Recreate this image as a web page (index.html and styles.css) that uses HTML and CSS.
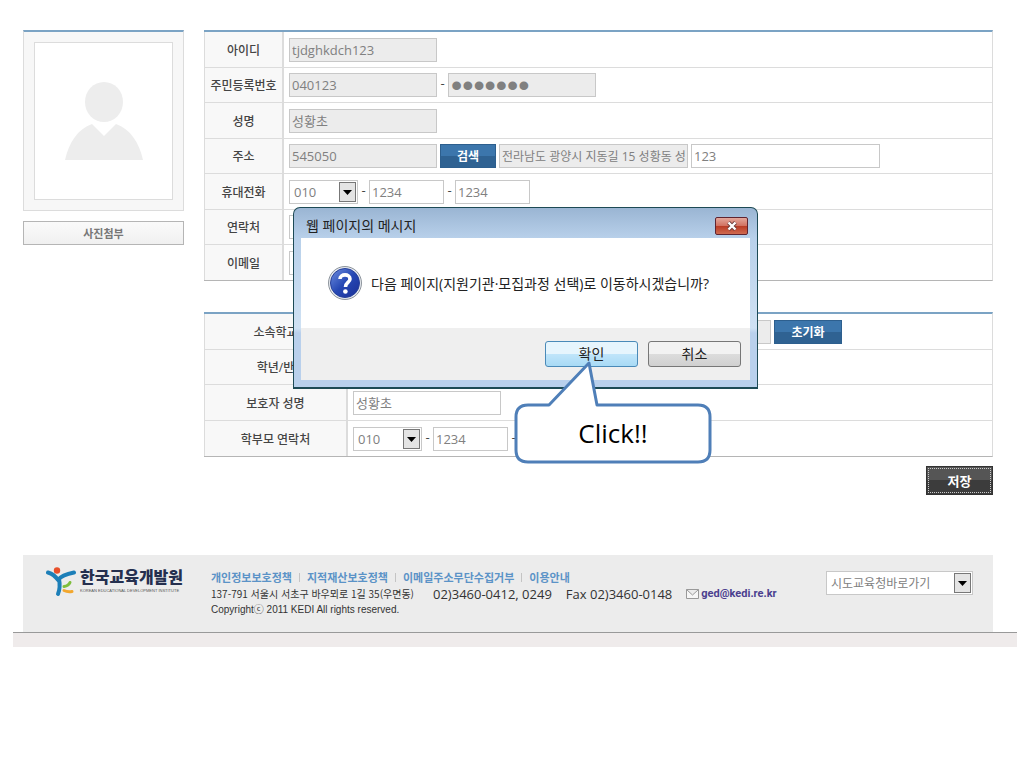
FILE: index.html
```html
<!DOCTYPE html>
<html lang="ko">
<head>
    <meta charset="UTF-8">
    <meta name="viewport" content="width=device-width, initial-scale=1.0">
    <title>한국교육개발원</title>
    <link rel="stylesheet" href="styles.css">
</head>
<body>
    <div class="container">

        <!-- Photo -->
        <div class="photo">
            <div class="photo-frame">
                <div class="photo-inner">
                    <svg width="78" height="80" viewBox="0 0 78 80">
                        <ellipse cx="39" cy="21" rx="19" ry="20" fill="#ededed"/>
                        <path d="M0 79C4 61 13 48 27 43L39 55L51 43C65 48 74 61 78 79Z" fill="#ededed"/>
                    </svg>
                </div>
            </div>
            <button type="button" class="btn-photo">사진첨부</button>
        </div>

        <form class="forms">
            <!-- Personal information -->
            <table>
                <tr>
                    <th><label for="userId">아이디</label></th>
                    <td><div class="row"><input type="text" id="userId" value="tjdghkdch123" readonly></div></td>
                </tr>
                <tr>
                    <th><label for="jumin1">주민등록번호</label></th>
                    <td><div class="row">
                        <input type="text" id="jumin1" value="040123" readonly>
                        <span class="dash">-</span>
                        <input type="password" aria-label="주민등록번호 뒷자리" value="1234567" readonly>
                    </div></td>
                </tr>
                <tr>
                    <th><label for="userName">성명</label></th>
                    <td><div class="row"><input type="text" id="userName" value="성황초" readonly></div></td>
                </tr>
                <tr>
                    <th><label for="zip">주소</label></th>
                    <td><div class="row">
                        <input type="text" id="zip" value="545050" readonly>
                        <button type="button" class="btn-blue">검색</button>
                        <input type="text" class="long address-base" aria-label="기본주소" value="전라남도 광양시 지동길 15 성황동 성황초등학교" readonly>
                        <input type="text" class="long" aria-label="상세주소" value="123">
                    </div></td>
                </tr>
                <tr>
                    <th><label for="mobile">휴대전화</label></th>
                    <td><div class="row">
                        <select id="mobile"><option>010</option></select>
                        <span class="dash">-</span>
                        <input type="text" class="short" aria-label="휴대전화 앞자리" value="1234">
                        <span class="dash">-</span>
                        <input type="text" class="short" aria-label="휴대전화 뒷자리" value="1234">
                    </div></td>
                </tr>
                <tr>
                    <th><label for="tel">연락처</label></th>
                    <td><div class="row"><select id="tel"><option></option></select></div></td>
                </tr>
                <tr>
                    <th><label for="email">이메일</label></th>
                    <td><div class="row"><input type="text" id="email"></div></td>
                </tr>
            </table>

            <!-- School information -->
            <table class="school">
                <tr>
                    <th><label for="school">소속학교</label></th>
                    <td><div class="row">
                        <input type="text" id="school" class="school-name" readonly>
                        <button type="button" class="btn-blue wide">초기화</button>
                    </div></td>
                </tr>
                <tr>
                    <th><label for="grade">학년/반</label></th>
                    <td><div class="row"><input type="text" id="grade" class="short"></div></td>
                </tr>
                <tr>
                    <th><label for="parent">보호자 성명</label></th>
                    <td><div class="row"><input type="text" id="parent" value="성황초"></div></td>
                </tr>
                <tr>
                    <th><label for="parentTel">학부모 연락처</label></th>
                    <td><div class="row">
                        <select id="parentTel"><option>010</option></select>
                        <span class="dash">-</span>
                        <input type="text" class="short" aria-label="학부모 연락처 앞자리" value="1234">
                        <span class="dash">-</span>
                        <input type="text" class="short" aria-label="학부모 연락처 뒷자리">
                    </div></td>
                </tr>
            </table>

            <button type="button" class="btn-save">저장</button>
        </form>
    </div>

    <!-- Footer -->
    <footer>
        <div class="footer-inner">
            <div class="logo">
                <svg width="30" height="30" viewBox="0 0 30 30" fill="none" stroke-linecap="round">
                    <circle cx="11" cy="3.500" r="3.200" fill="#e8502a"/>
                    <path d="M2 5.500C7 7 10 10 12 13C15 9 20 7 28 5.500" stroke="#1d7fb8" stroke-width="4" stroke-linejoin="round"/>
                    <path d="M13 12C14 17 14 22 12 27" stroke="#1d7fb8" stroke-width="4"/>
                    <path d="M18 19.500C21 19 23 18 24 15.500" stroke="#7fbe3c" stroke-width="3"/>
                    <path d="M18 23.500C21 25 23 25 26 24.500" stroke="#f2a72e" stroke-width="3"/>
                </svg>
                <div class="logo-text">
                    <strong>한국교육개발원</strong>
                    <small>KOREAN EDUCATIONAL DEVELOPMENT INSTITUTE</small>
                </div>
            </div>
            <div class="info">
                <div class="policy">
                    <a href="#">개인정보보호정책</a>
                    <a href="#">지적재산보호정책</a>
                    <a href="#">이메일주소무단수집거부</a>
                    <a href="#">이용안내</a>
                </div>
                <div class="contact">
                    <span class="address">137-791 서울시 서초구 바우뫼로 1길 35(우면동)</span>
                    <span>02)3460-0412, 0249</span>
                    <span>Fax 02)3460-0148</span>
                    <a href="mailto:ged@kedi.re.kr" class="mail">
                        <svg width="13" height="10" viewBox="0 0 13 10" fill="#f6f6f6" stroke="#999"><path d="M.5.5H12.500V9.500H.5ZM.5.5L6.500 6L12.500.5"/></svg>
                        ged@kedi.re.kr
                    </a>
                </div>
                <p class="copyright">Copyrightⓒ 2011 KEDI All rights reserved.</p>
            </div>
            <select class="office" aria-label="시도교육청바로가기"><option>시도교육청바로가기</option></select>
        </div>
    </footer>

    <!-- Confirm dialog -->
    <div class="dialog" role="dialog" aria-labelledby="dialogTitle">
        <div class="dialog-title">
            <span id="dialogTitle">웹 페이지의 메시지</span>
            <button type="button" class="close" aria-label="닫기">
                <svg width="12" height="10" viewBox="0 0 12 10" fill="none"><path d="M2.500 1.500L9.500 8.500M9.500 1.500L2.500 8.500" stroke="#6b3b3b" stroke-width="4"/><path d="M2.500 1.500L9.500 8.500M9.500 1.500L2.500 8.500" stroke="#fff" stroke-width="2.400"/></svg>
            </button>
        </div>
        <div class="dialog-body">
            <svg width="34" height="34" viewBox="0 0 34 34">
                <defs>
                    <linearGradient id="ball" x1="0" y1="0" x2="1" y2="1">
                        <stop offset="0" stop-color="#6f8fe0"/>
                        <stop offset=".5" stop-color="#2648b4"/>
                        <stop offset="1" stop-color="#1a2f96"/>
                    </linearGradient>
                </defs>
                <circle cx="17" cy="17" r="16.500" fill="#e4e8ee" stroke="#8d949c"/>
                <circle cx="17" cy="17" r="14.500" fill="url(#ball)" stroke="#27409a"/>
                <path d="M12 13C12 7.500 22 7.500 22 13C22 16.500 17.500 16.500 17.500 21" fill="none" stroke="#fff" stroke-width="3.600"/>
                <circle cx="17.400" cy="25.500" r="2.300" fill="#fff"/>
            </svg>
            <p>다음 페이지(지원기관·모집과정 선택)로 이동하시겠습니까?</p>
        </div>
        <div class="dialog-buttons">
            <button type="button" class="ok">확인</button>
            <button type="button">취소</button>
        </div>

        <div class="callout">
            <svg width="198" height="104" viewBox="0 0 198 104">
                <path d="M14 44H35L75 2L83 44H184Q196 44 196 56V89Q196 101 184 101H14Q2 101 2 89V56Q2 44 14 44Z" fill="#fff" stroke="#4f7fb8" stroke-width="3" stroke-linejoin="round"/>
            </svg>
            <span>Click!!</span>
        </div>
    </div>
</body>
</html>
```

FILE: styles.css
```css
* {
    box-sizing: border-box;
}

body {
    font-family: "Open Sans", "Noto Sans CJK KR", sans-serif;
    font-size: 13px;
    color: #444;
    background: #fff;
    margin: 0;
    padding: 30px 7px 0 13px;
    position: relative;
}

button, input, select {
    font-family: inherit;
    font-size: 13px;
    margin: 0;
}

button {
    padding: 0;
    cursor: pointer;
}

.container {
    display: flex;
    gap: 20px;
    padding: 0 24px 0 10px;
}

/* photo */
.photo {
    width: 161px;
    flex-shrink: 0;
}

.photo-frame {
    padding: 10px;
    background: #f7f7f7;
    border: 1px solid #dcdcdc;
    border-top: 2px solid #7ba3c4;
}

.photo-inner {
    display: flex;
    justify-content: center;
    align-items: center;
    height: 158px;
    background: #fff;
    border: 1px solid #dcdcdc;
}

.btn-photo {
    width: 100%;
    height: 24px;
    margin-top: 10px;
    font-size: 11px;
    font-weight: bold;
    color: #777;
    background: linear-gradient(#fafafa, #f0f0f0);
    border: 1px solid #b5b5b5;
}

/* form tables */
.forms {
    flex: 1;
    min-width: 0;
}

table {
    width: 100%;
    table-layout: fixed;
    border-spacing: 0;
    border-top: 2px solid #7ba3c4;
    border-right: 1px solid #dcdcdc;
    border-bottom: 1px solid #b5b5b5;
}

th, td {
    height: 35px;
    padding: 0;
    border-bottom: 1px solid #dcdcdc;
}

tr:nth-child(odd) th {
    height: 36px;
}

tr:last-child th, tr:last-child td {
    height: 35px;
    border-bottom: none;
}

th {
    width: 80px;
    font-size: 12px;
    font-weight: 500;
    color: #444;
    background: #f8f8f8;
    border-left: 1px solid #dcdcdc;
    border-right: 2px solid #dcdcdc;
}

td {
    padding-left: 5px;
}

.school {
    margin-top: 31px;
}

.school th {
    width: 144px;
}

.row {
    display: flex;
    align-items: center;
    gap: 3px;
}

.dash {
    width: 5px;
    text-align: center;
    line-height: 24px;
    padding-bottom: 4px;
}

input, select {
    width: 148px;
    height: 24px;
    padding: 0 2px;
    color: #808080;
    background-color: #fff;
    border: 1px solid #c8c8c8;
    border-radius: 0;
}

input:read-only {
    background-color: #ececec;
}

input.short {
    width: 75px;
}

input.long {
    width: 189px;
}

input.address-base {
    font-size: 12px;
}

input.school-name {
    width: 418px;
}

input[type="password"] {
    font-family: "Liberation Sans", sans-serif;
    font-size: 32px;
}

select {
    width: 69px;
    padding: 0 4px;
    appearance: none;
    background-image: url("data:image/svg+xml,%3Csvg xmlns='http://www.w3.org/2000/svg' width='17' height='20'%3E%3Crect x='.5' y='.5' width='16' height='19' fill='%23e4e4e4' stroke='%23777'/%3E%3Cpath d='M4 8h9l-4.500 5z' fill='%23000'/%3E%3C/svg%3E");
    background-repeat: no-repeat;
    background-position: right 1px center;
}

.btn-blue {
    width: 56px;
    height: 24px;
    font-weight: bold;
    font-size: 12px;
    color: #fff;
    background: linear-gradient(#3c76ac 50%, #2f6292 50%);
    border: 1px solid #2d5f8e;
}

.btn-blue.wide {
    width: 68px;
}

.btn-save {
    display: block;
    width: 67px;
    height: 29px;
    margin: 9px 0 0 auto;
    font-weight: bold;
    color: #fff;
    background: linear-gradient(#555 50%, #3c3c3c 50%);
    border: 1px solid #333;
    outline: 1px dotted #ccc;
    outline-offset: -3px;
}

/* footer */
footer {
    margin-top: 60px;
    padding: 0 24px 14px 10px;
    background: linear-gradient(#999, #999) 0 77px / 100% 1px no-repeat, linear-gradient(#efebeb, #efebeb) 0 78px no-repeat;
}

.footer-inner {
    display: flex;
    align-items: flex-start;
    height: 77px;
    margin-bottom: 1px;
    padding: 12px 20px 0 23px;
    background: #ececec;
}

.logo {
    display: flex;
    gap: 4px;
    width: 165px;
}

.logo-text strong {
    display: block;
    font-size: 16px;
    font-weight: 900;
    line-height: 19px;
    margin-top: 1px;
    color: #25304f;
    white-space: nowrap;
}

.logo-text small {
    display: block;
    font-family: "Liberation Sans", sans-serif;
    font-size: 4px;
    line-height: 4px;
    margin-top: 2px;
    color: #555;
    white-space: nowrap;
}

.info {
    flex: 1;
    line-height: 16px;
    color: #333;
    white-space: nowrap;
    padding-top: 3px;
}

.policy {
    display: flex;
    font-size: 11px;
    font-weight: bold;
}

.policy a {
    color: #5b93c7;
    text-decoration: none;
}

.policy a + a::before {
    content: "";
    display: inline-block;
    height: 9px;
    margin: 0 7px;
    border-left: 1px solid #c4c4c4;
}

.contact {
    display: flex;
    gap: 14px;
}

.address {
    font-family: "Noto Sans CJK KR", sans-serif;
    font-size: 10px;
    min-width: 208px;
}

.mail {
    display: flex;
    align-items: center;
    gap: 2px;
    font-family: Roboto, sans-serif;
    font-size: 11px;
    font-weight: bold;
    color: #4b3f8f;
    text-decoration: none;
}

.copyright {
    font-family: "Liberation Sans", "Noto Sans CJK KR", sans-serif;
    font-size: 10px;
    margin: 0;
}

.office {
    width: 147px;
    margin-top: 4px;
    font-size: 12px;
}

/* confirm dialog */
.dialog {
    position: absolute;
    top: 207px;
    left: 293px;
    width: 465px;
    padding: 0 7px 7px;
    color: #222;
    font-size: 14px;
    background: linear-gradient(#9ab5d3, #b8d0ea 30px, #cfe1f3 120px, #b9d0ec 125px);
    border: 1px solid #1d4a55;
    border-bottom-width: 2px;
    border-radius: 7px 7px 0 0;
}

.dialog-title {
    display: flex;
    justify-content: space-between;
    align-items: center;
    height: 30px;
    padding: 6px 2px 0 5px;
    line-height: 24px;
}

.close {
    display: flex;
    justify-content: center;
    align-items: center;
    width: 33px;
    height: 18px;
    background: linear-gradient(#e3a79c, #d1705f 50%, #b93a24 50%, #cf6a50);
    border: 1px solid #5f2430;
    border-radius: 2px;
}

.dialog-body {
    display: flex;
    align-items: center;
    gap: 9px;
    height: 90px;
    padding: 0 27px;
    background: #fff;
    white-space: nowrap;
}

.dialog-body p {
    margin: 0;
}

.dialog-buttons {
    display: flex;
    justify-content: flex-end;
    gap: 10px;
    padding: 13px 9px;
    background: #efefef;
}

.dialog-buttons button {
    width: 93px;
    height: 26px;
    font-size: 14px;
    line-height: 22px;
    color: #222;
    background: linear-gradient(#f2f2f2 50%, #dcdcdc 50%, #d0d0d0);
    border: 1px solid #777;
    border-radius: 3px;
}

.dialog-buttons .ok {
    background: linear-gradient(#e6f5fd 50%, #c0e5fa 50%, #a8daf5);
    border-color: #4a8ab8;
}

/* speech bubble over the OK button */
.callout {
    position: absolute;
    top: 153px;
    left: 220px;
    width: 198px;
}

.callout svg {
    display: block;
}

.callout span {
    position: absolute;
    right: 0;
    bottom: 3px;
    left: 0;
    line-height: 57px;
    font-size: 26px;
    text-align: center;
    color: #000;
}
```
